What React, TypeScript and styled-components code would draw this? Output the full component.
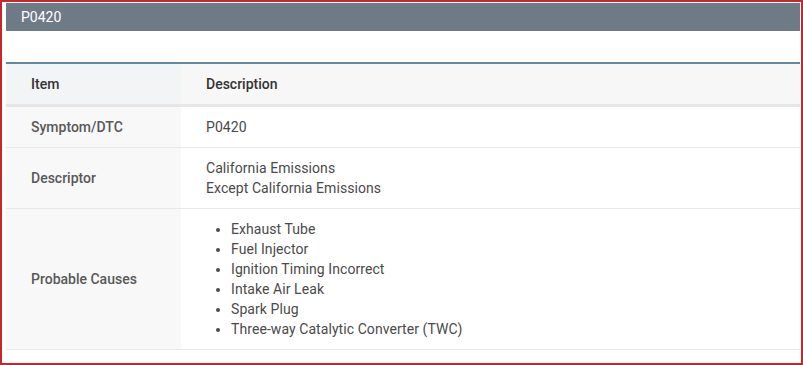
import styled, { createGlobalStyle } from 'styled-components'

const GlobalStyle = createGlobalStyle`
  html, body {
    margin: 0;
    padding: 0;
    background: #ffffff;
  }
  body {
    font-family: Roboto, 'Noto Sans', Arial, sans-serif;
    font-size: 14px;
  }
`

const Frame = styled.div`
  box-sizing: border-box;
  width: 803px;
  height: 365px;
  border: 2px solid #c4282c;
  padding: 1px 1px 0 4px;
  background: #ffffff;
  overflow: hidden;
`

const TitleBar = styled.div`
  height: 28px;
  background: #6f7a87;
  color: #ffffff;
  font-size: 14px;
  line-height: 28px;
  padding-left: 15px;
`

const Table = styled.table`
  width: 100%;
  margin-top: 31px;
  border-collapse: collapse;
  border-top: 2px solid #5f88a6;
  color: #444444;
  line-height: 20px;
`

const HeadCell = styled.th<{ first?: boolean }>`
  text-align: left;
  font-weight: 500;
  color: #333333;
  padding: 10px 25px;
  height: 20px;
  background: ${(p) => (p.first ? '#f3f4f5' : '#f7f7f7')};
  border-bottom: 3px solid #e6e6e6;
  width: ${(p) => (p.first ? '125px' : 'auto')};
`

const LabelCell = styled.td`
  padding: 10px 25px;
  font-weight: 500;
  color: #585858;
  background: #f8f8f8;
  border-bottom: 1px solid #e8e8e8;
  vertical-align: middle;
`

const ValueCell = styled.td`
  padding: 10px 25px;
  background: #ffffff;
  color: #4a4a4a;
  letter-spacing: 0.07px;
  border-bottom: 1px solid #e8e8e8;
  vertical-align: middle;
`

const Causes = styled.ul`
  margin: 0;
  padding-left: 25px;
  list-style: disc;
`

const rows: { label: string; lines: string[]; list?: boolean }[] = [
  { label: 'Symptom/DTC', lines: ['P0420'] },
  { label: 'Descriptor', lines: ['California Emissions', 'Except California Emissions'] },
  {
    label: 'Probable Causes',
    list: true,
    lines: [
      'Exhaust Tube',
      'Fuel Injector',
      'Ignition Timing Incorrect',
      'Intake Air Leak',
      'Spark Plug',
      'Three-way Catalytic Converter (TWC)',
    ],
  },
]

export default function App() {
  return (
    <>
      <GlobalStyle />
      <Frame>
        <TitleBar>P0420</TitleBar>
        <Table>
          <thead>
            <tr>
              <HeadCell first>Item</HeadCell>
              <HeadCell>Description</HeadCell>
            </tr>
          </thead>
          <tbody>
            {rows.map((row) => (
              <tr key={row.label}>
                <LabelCell>{row.label}</LabelCell>
                <ValueCell>
                  {row.list ? (
                    <Causes>
                      {row.lines.map((l) => (
                        <li key={l}>{l}</li>
                      ))}
                    </Causes>
                  ) : (
                    row.lines.map((l) => <div key={l}>{l}</div>)
                  )}
                </ValueCell>
              </tr>
            ))}
          </tbody>
        </Table>
      </Frame>
    </>
  )
}
